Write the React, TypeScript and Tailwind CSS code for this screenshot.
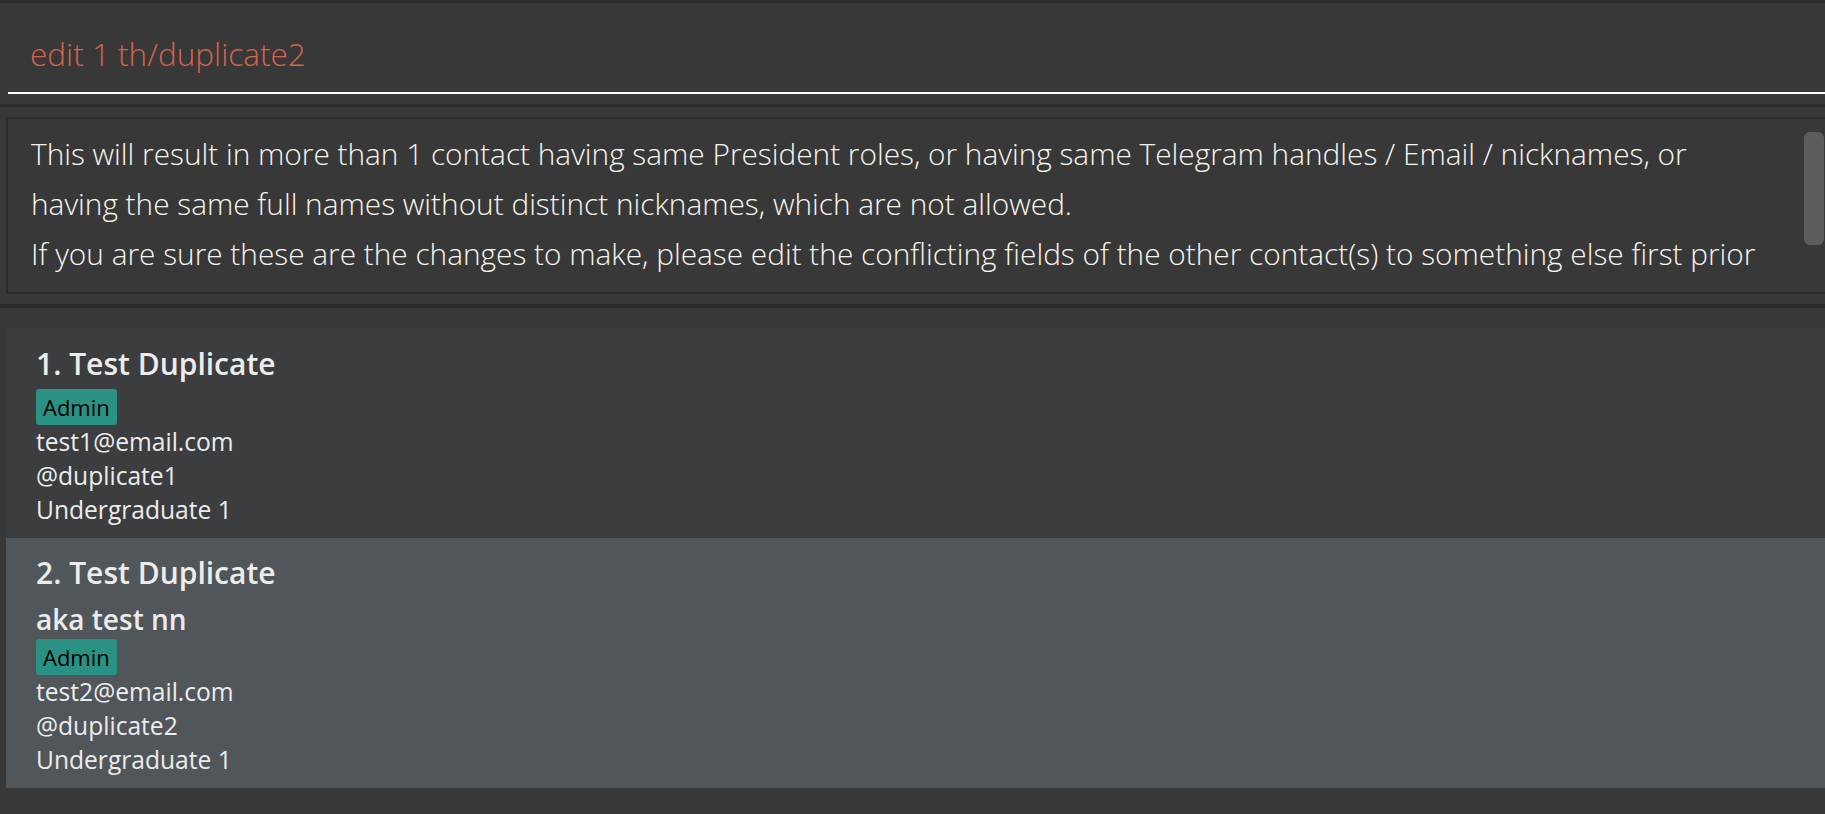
const font = "font-['Open_Sans',sans-serif]";

type Person = {
  index: number;
  name: string;
  nickname?: string;
  role: string;
  email: string;
  telegram: string;
  year: string;
  selected?: boolean;
};

const people: Person[] = [
  {
    index: 1,
    name: "Test Duplicate",
    role: "Admin",
    email: "test1@email.com",
    telegram: "@duplicate1",
    year: "Undergraduate 1",
  },
  {
    index: 2,
    name: "Test Duplicate",
    nickname: "aka test nn",
    role: "Admin",
    email: "test2@email.com",
    telegram: "@duplicate2",
    year: "Undergraduate 1",
    selected: true,
  },
];

function PersonCard({ p }: { p: Person }) {
  return (
    <div
      className={`flex flex-col pl-[30px] pb-[11px] text-[#ececec] ${
        p.selected ? "bg-[#51565a] pt-[15px]" : "bg-[#3c3d3f] pt-[16px]"
      }`}
    >
      <div className="h-[40px] text-[30px] leading-[40px] font-semibold">
        {p.index}. {p.name}
      </div>
      {p.nickname ? (
        <div className="mt-[6px] h-[40px] text-[28px] leading-[40px] font-semibold">{p.nickname}</div>
      ) : (
        <div className="h-[5px]" />
      )}
      <div className="flex">
        <span className="h-[36px] rounded-[3px] bg-[#2a9284] px-[7px] text-[22px] leading-[36px] font-medium text-black">
          {p.role}
        </span>
      </div>
      <div className="text-[24.6px] leading-[34px]">{p.email}</div>
      <div className="text-[24.6px] leading-[34px]">{p.telegram}</div>
      <div className="text-[24.6px] leading-[34px]">{p.year}</div>
    </div>
  );
}

export default function App() {
  return (
    <div className={`h-[814px] w-full overflow-hidden bg-[#383838] ${font}`}>
      <div className="h-[3px] bg-[#2b2b2b]" />
      {/* command box */}
      <div className="h-[89px] pl-[30px] pt-[31px]">
        <div className="text-[31.5px] leading-[40px] font-light text-[#d4644d]">edit 1 th/duplicate2</div>
      </div>
      <div className="ml-[8px] h-[2px] bg-white" />
      <div className="h-[10px]" />
      <div className="h-[3px] bg-[#2b2b2b]" />
      <div className="h-[10px]" />
      {/* result display */}
      <div className="ml-[6px] flex h-[177px] border-y-2 border-l-2 border-[#2b2b2b]">
        <div className="min-w-0 flex-1 overflow-hidden pl-[23px] pt-[10px] text-[29.8px] leading-[50px] font-light whitespace-nowrap text-[#f7f5ef]">
          <div>
            This will result in more than 1 contact having same President roles, or having same Telegram handles / Email / nicknames, or
          </div>
          <div>having the same full names without distinct nicknames, which are not allowed.</div>
          <div>
            If you are sure these are the changes to make, please edit the conflicting fields of the other contact(s) to something else first prior
          </div>
        </div>
        <div className="mr-[1px] mt-[13px] h-[113px] w-[20px] rounded-[6px] bg-[#5c5c5c]" />
      </div>
      <div className="h-[10px]" />
      <div className="h-[4px] bg-[#2b2b2b]" />
      <div className="h-[20px]" />
      {/* person list */}
      <div className="ml-[6px] flex flex-col">
        {people.map((p) => (
          <PersonCard key={p.index} p={p} />
        ))}
      </div>
    </div>
  );
}
